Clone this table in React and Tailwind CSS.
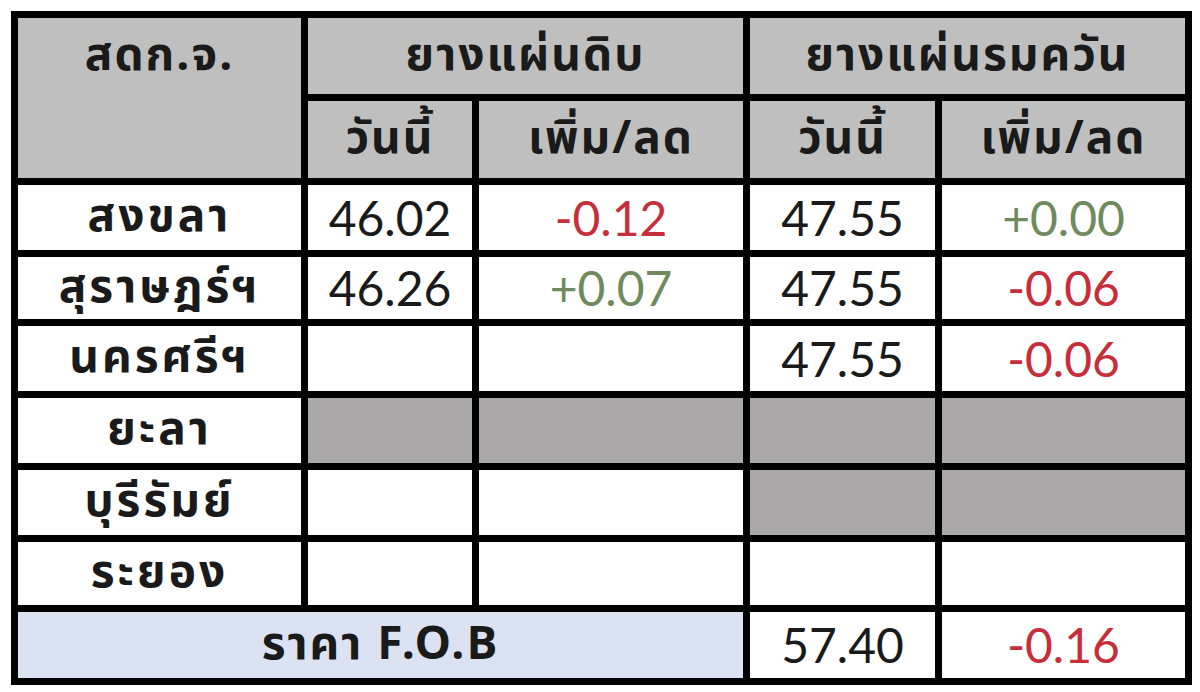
const RED = "text-[#c62f3a]";
const GREEN = "text-[#6f8a5c]";

const rows = [
  { name: "สงขลา", a: "46.02", ad: "-0.12", adc: RED, b: "47.55", bd: "+0.00", bdc: GREEN, h: "h-[65px]" },
  { name: "สุราษฎร์ฯ", a: "46.26", ad: "+0.07", adc: GREEN, b: "47.55", bd: "-0.06", bdc: RED, h: "h-[62px]" },
  { name: "นครศรีฯ", a: "", ad: "", b: "47.55", bd: "-0.06", bdc: RED, h: "h-[65px]" },
  { name: "ยะลา", grayA: true, grayB: true, h: "h-[65px]" },
  { name: "บุรีรัมย์", grayB: true, h: "h-[65px]" },
  { name: "ระยอง", h: "h-[63px]" },
];

const thai = "font-['Tahoma','Noto_Sans_Thai','Loma','DejaVu_Sans',sans-serif]";
const num = "font-['Lato','Liberation_Sans',sans-serif]";
const head = `text-[46px] font-bold tracking-[2px] text-[#1a1a1a] ${thai}`;

function Cell({ children, className = "" }) {
  return (
    <div className={`flex items-center justify-center ${className}`}>{children}</div>
  );
}

export default function App() {
  return (
    <div className="w-[1200px] h-[692px] bg-white pl-[11px] pt-[11px]">
      <div className="inline-grid bg-black p-[7px] gap-[7px] grid-cols-[283px_164px_264px_185px_243px]">
        <div className="row-span-2 bg-[#bfbfbf]">
          <Cell className={`h-[76px] ${head}`}>สดก.จ.</Cell>
        </div>
        <Cell className={`col-span-2 h-[76px] bg-[#bfbfbf] ${head}`}>ยางแผ่นดิบ</Cell>
        <Cell className={`col-span-2 h-[76px] bg-[#bfbfbf] ${head}`}>ยางแผ่นรมควัน</Cell>
        {["วันนี้", "เพิ่ม/ลด", "วันนี้", "เพิ่ม/ลด"].map((t, i) => (
          <Cell key={i} className={`h-[77px] bg-[#bfbfbf] ${head}`}>
            {t}
          </Cell>
        ))}

        {rows.map((r) => (
          <div key={r.name} className="contents">
            <Cell className={`${r.h} bg-white text-[46px] font-bold tracking-[3px] text-[#1a1a1a] ${thai}`}>
              {r.name}
            </Cell>
            <Cell className={`${r.h} ${r.grayA ? "bg-[#a9a7a7]" : "bg-white"} text-[48px] text-[#1a1a1a] ${num}`}>
              {r.a}
            </Cell>
            <Cell className={`${r.h} ${r.grayA ? "bg-[#a9a7a7]" : "bg-white"} text-[48px] ${r.adc || ""} ${num}`}>
              {r.ad}
            </Cell>
            <Cell className={`${r.h} ${r.grayB ? "bg-[#a9a7a7]" : "bg-white"} text-[48px] text-[#1a1a1a] ${num}`}>
              {r.b}
            </Cell>
            <Cell className={`${r.h} ${r.grayB ? "bg-[#a9a7a7]" : "bg-white"} text-[48px] ${r.bdc || ""} ${num}`}>
              {r.bd}
            </Cell>
          </div>
        ))}

        <Cell className={`col-span-3 h-[66px] bg-[#dbe2f2] ${head}`}>ราคา F.O.B</Cell>
        <Cell className={`h-[66px] bg-white text-[48px] text-[#1a1a1a] ${num}`}>57.40</Cell>
        <Cell className={`h-[66px] bg-white text-[48px] ${RED} ${num}`}>-0.16</Cell>
      </div>
    </div>
  );
}
